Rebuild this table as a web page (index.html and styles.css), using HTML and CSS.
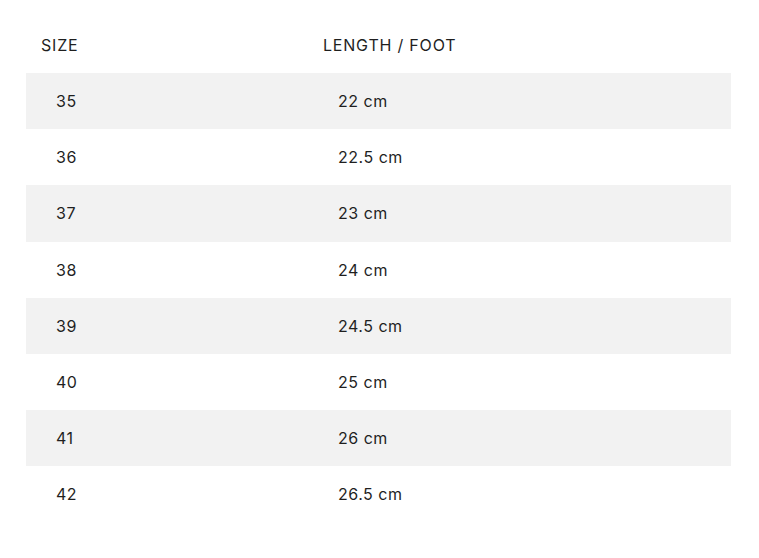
FILE: index.html
```html
<!DOCTYPE html>
<html>
<head>
<meta charset="utf-8">
<link rel="stylesheet" href="styles.css">
</head>
<body>
<table class="size-table">
  <thead>
    <tr><th class="col-size">SIZE</th><th class="col-length">LENGTH / FOOT</th></tr>
  </thead>
  <tbody>
    <tr><td>35</td><td>22 cm</td></tr>
    <tr><td>36</td><td>22.5 cm</td></tr>
    <tr><td>37</td><td>23 cm</td></tr>
    <tr><td>38</td><td>24 cm</td></tr>
    <tr><td>39</td><td>24.5 cm</td></tr>
    <tr><td>40</td><td>25 cm</td></tr>
    <tr><td>41</td><td>26 cm</td></tr>
    <tr><td>42</td><td>26.5 cm</td></tr>
  </tbody>
</table>
</body>
</html>
```
FILE: styles.css
```css
html, body {
  margin: 0;
  background: #fff;
}
body {
  padding: 16px 28px 0 26px;
  font-family: Inter, "Open Sans", sans-serif;
  font-size: 16px;
  color: #1f1f1f;
}
.size-table {
  width: 705px;
  border-collapse: collapse;
  border-spacing: 0;
}
.size-table th {
  height: 57px;
  padding: 0 15px;
  font-weight: 400;
  text-align: left;
  vertical-align: middle;
  letter-spacing: 0.8px;
}
.col-size { width: 40%; }
.size-table td {
  height: 56.2px;
  padding: 0 29px 0 30px;
  vertical-align: middle;
  letter-spacing: 0.5px;
}
.size-table tbody tr:nth-child(odd) {
  background: #f2f2f2;
}
```
